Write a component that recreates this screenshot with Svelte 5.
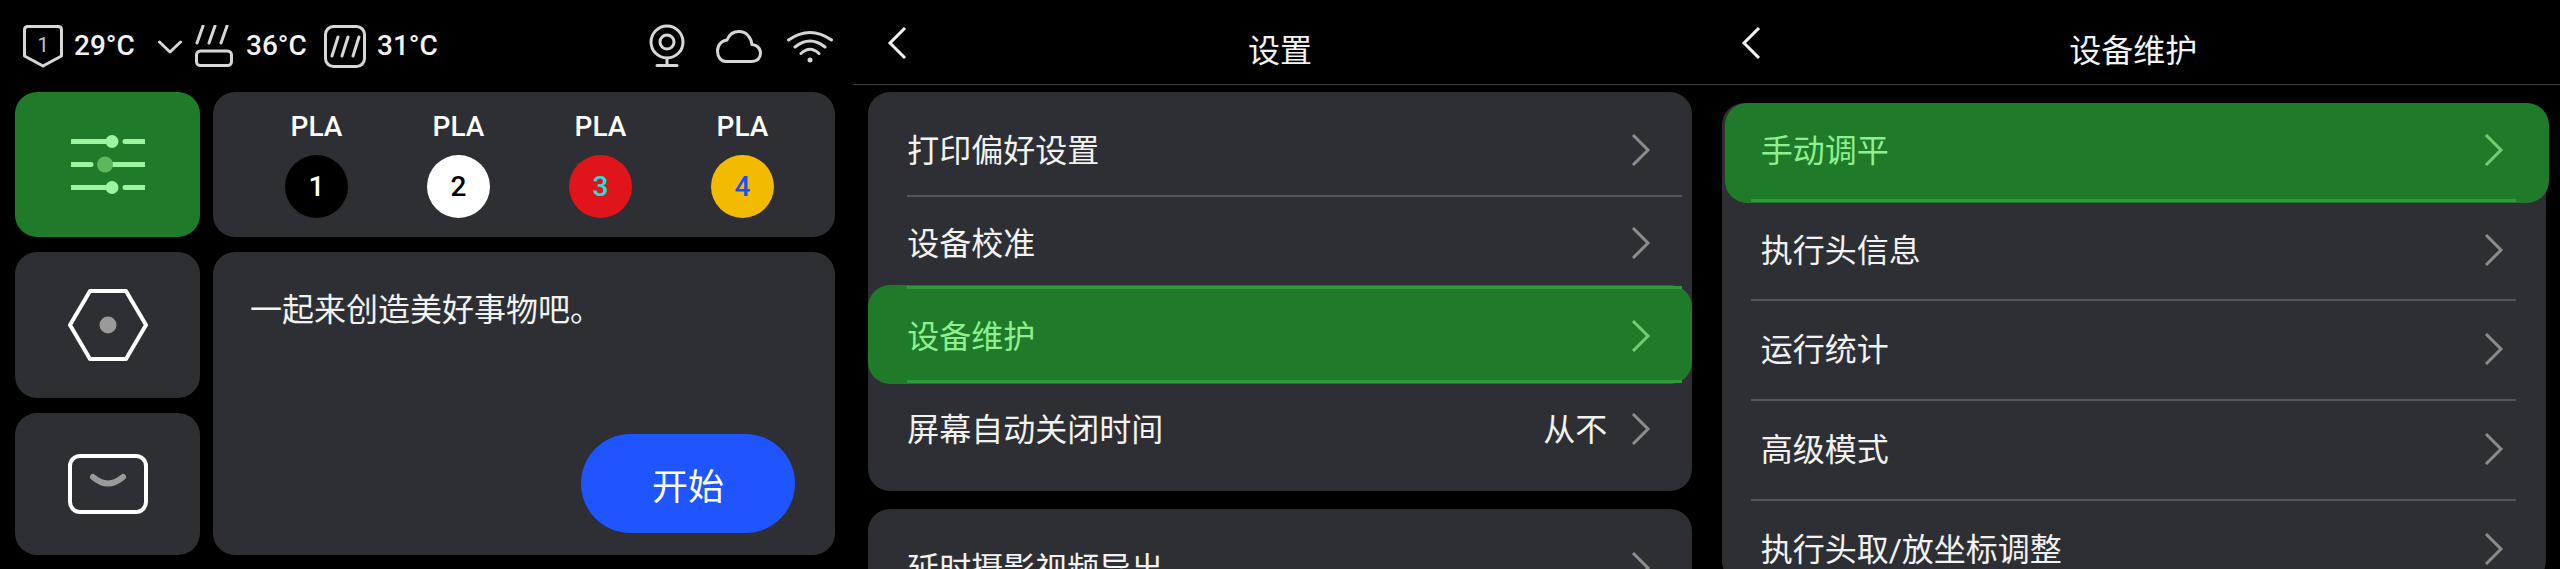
<script>
    const spools = [
        { n: 1, bg: "#000000", fg: "#ffffff" },
        { n: 2, bg: "#ffffff", fg: "#000000" },
        { n: 3, bg: "#e0141a", fg: "#22e0e0" },
        { n: 4, bg: "#f2bb00", fg: "#1a4fff" }
    ];

    const settings = [
        { label: "打印偏好设置", cls: "s1" },
        { label: "设备校准", cls: "s2" },
        { label: "设备维护", cls: "s3 active" },
        { label: "屏幕自动关闭时间", cls: "s4", value: "从不" }
    ];

    const maintenance = [
        { label: "手动调平", cls: "m1 active" },
        { label: "执行头信息", cls: "m2" },
        { label: "运行统计", cls: "m3" },
        { label: "高级模式", cls: "m4" },
        { label: "执行头取/放坐标调整", cls: "m5" }
    ];
</script>

{#snippet chevron()}
    <svg class="chev" width="20" height="32" viewBox="0 0 20 32"><path d="M2 1 L17 16 L2 31" /></svg>
{/snippet}

{#snippet header(title)}
    <header>
        <svg class="back" width="20" height="32" viewBox="0 0 20 32"><path d="M18 1 L3 16 L18 31" /></svg>
        <h1>{title}</h1>
    </header>
{/snippet}

<div class="screen">
    <section class="home">
        <div class="status">
            <div class="nozzle">
                <svg class="ico" width="40" height="43" viewBox="0 0 40 43"><path d="M5 1.5 H35 Q38.5 1.5 38.5 5 V31 L20 41 L1.5 31 V5 Q1.5 1.5 5 1.5 Z" /></svg>
                <span>1</span>
            </div>
            <span class="temp t1">29°C</span>
            <svg class="ico drop" width="24" height="14" viewBox="0 0 24 14"><path d="M1.5 2 L12 12 L22.5 2" /></svg>
            <svg class="ico" width="38" height="42" viewBox="0 0 38 42">
                <path d="M8 1 L2 18 M20 1 L14 18 M32 1 L26 18" />
                <rect x="1.5" y="26" width="35" height="14.5" rx="4" />
            </svg>
            <span class="temp t2">36°C</span>
            <svg class="ico chamber" width="42" height="43" viewBox="0 0 42 43">
                <rect x="1.5" y="1.5" width="39" height="40" rx="8" />
                <path d="M14 12 L8 31 M24 12 L18 31 M35 12 L29 31" />
            </svg>
            <span class="temp t3">31°C</span>
            <div class="right-icons">
                <svg class="ico cam" width="36" height="44" viewBox="0 0 36 44">
                    <circle cx="18" cy="18" r="16" />
                    <circle cx="18" cy="18" r="7" />
                    <path d="M18 34 V40 M8 41.5 H28" />
                </svg>
                <svg class="ico cloud" width="46" height="33" viewBox="0 0 46 33"><path d="M10 31.5 H36 C41 31.5 44.5 28 44.5 23 C44.5 18 40 14.5 36 14.5 C35 7 30 1.5 23 1.5 C17 1.5 13 5 11 10 C5.5 10.5 1.5 15 1.5 21 C1.5 27 5 31.5 10 31.5 Z" /></svg>
                <svg class="ico" width="46" height="33" viewBox="0 0 46 33">
                    <path d="M1.5 10 Q23 -5 44.5 10 M8 17 Q23 5 38 17 M14 23.5 Q23 15 32 23.5" />
                    <circle class="dot" cx="23" cy="30" r="2.5" />
                </svg>
            </div>
        </div>

        <div class="grid">
            <div class="tile green">
                <svg width="74" height="60" viewBox="0 0 74 60">
                    <path class="bar" d="M0 6.5 H40 M54 6.5 H74 M0 29.5 H20 M42 29.5 H74 M0 52.5 H40 M54 52.5 H74" />
                    <circle class="knob" cx="41" cy="6.5" r="6.5" />
                    <circle class="knob mid" cx="34" cy="29.5" r="8" />
                    <circle class="knob" cx="41" cy="52.5" r="6.5" />
                </svg>
            </div>
            <div class="card spools">
                {#each spools as s}
                    <div class="spool">
                        <span class="pla">PLA</span>
                        <span class="disc" style="background: {s.bg}; color: {s.fg}">{s.n}</span>
                    </div>
                {/each}
            </div>
            <div class="tile">
                <svg width="80" height="72" viewBox="0 0 80 72">
                    <path class="outline" d="M22 2 H58 L78 36 L58 70 H22 L2 36 Z" />
                    <circle class="grey" cx="40" cy="36" r="8.5" />
                </svg>
            </div>
            <div class="card hello">
                <p>一起来创造美好事物吧。</p>
                <button>开始</button>
            </div>
            <div class="tile">
                <svg width="80" height="60" viewBox="0 0 80 60">
                    <rect class="outline" x="2" y="2" width="76" height="56" rx="10" />
                    <path class="smile" d="M25 23 Q40 36 55 23" />
                </svg>
            </div>
        </div>
    </section>

    <section class="page">
        {@render header("设置")}
        <div class="card list first">
            {#each settings as row, i}
                <div class="row {row.cls}">
                    <span class="label">{row.label}</span>
                    {#if row.value}<span class="value">{row.value}</span>{/if}
                    {@render chevron()}
                </div>
                {#if i === 0}<div class="divider"></div>{/if}
            {/each}
        </div>
        <div class="card list second">
            <div class="row s5">
                <span class="label">延时摄影视频导出</span>
                {@render chevron()}
            </div>
        </div>
    </section>

    <section class="page third">
        {@render header("设备维护")}
        <div class="card list maint">
            {#each maintenance as row, i}
                <div class="row {row.cls}">
                    <span class="label">{row.label}</span>
                    {@render chevron()}
                </div>
                {#if i > 0 && i < maintenance.length - 1}<div class="divider"></div>{/if}
            {/each}
        </div>
    </section>
</div>

<style>
    :global(body) {
        margin: 0;
        background: #000;
    }

    .screen {
        display: flex;
        width: 2560px;
        height: 569px;
        overflow: hidden;
        background: #000;
        color: #fff;
        font-family: Roboto, "Noto Sans CJK SC", sans-serif;
    }

    section {
        width: 853.33px;
        flex: none;
    }

    .card {
        background: #2d2f34;
        border-radius: 22px;
    }

    /* home */
    .status {
        display: flex;
        align-items: center;
        height: 92px;
        padding: 0 20px 0 23px;
        box-sizing: border-box;
    }

    .ico {
        flex: none;
        fill: none;
        stroke: #d6d8d6;
        stroke-width: 3;
        stroke-linecap: round;
        stroke-linejoin: round;
    }

    .ico .dot {
        fill: #d6d8d6;
        stroke: none;
    }

    .nozzle {
        position: relative;
        width: 40px;
        height: 43px;
    }

    .nozzle span {
        position: absolute;
        left: 0;
        right: 0;
        top: 8px;
        text-align: center;
        font-size: 20px;
        line-height: 24px;
        color: #c4c6c4;
    }

    .temp {
        font-size: 28px;
        font-weight: 500;
        color: #f2f2f2;
        line-height: 32px;
        width: 60px;
        white-space: nowrap;
    }

    .t1 { margin-left: 11px; }
    .drop { margin: 2px 13px 0 24px; }
    .t2 { margin-left: 13px; }
    .chamber { margin-left: 18px; }
    .t3 { margin-left: 11px; }

    .right-icons {
        margin-left: auto;
        display: flex;
        align-items: center;
    }

    .cloud {
        margin: 0 25px 0 31px;
    }

    .grid {
        display: grid;
        grid-template-columns: 185px 622px;
        grid-template-rows: 145px 146px 142px;
        column-gap: 13px;
        row-gap: 15px;
        padding-left: 15px;
    }

    .tile {
        display: flex;
        align-items: center;
        justify-content: center;
        background: #2d2f34;
        border-radius: 22px;
    }

    .green {
        background: #1f7a2a;
    }

    .bar {
        stroke: #9df59d;
        stroke-width: 5;
        stroke-linecap: round;
        fill: none;
    }

    .knob {
        fill: #9df59d;
    }

    .knob.mid {
        fill: #5cb85c;
    }

    .outline {
        fill: none;
        stroke: #fff;
        stroke-width: 4;
        stroke-linejoin: round;
    }

    .grey {
        fill: #9a9a9a;
    }

    .smile {
        fill: none;
        stroke: #9a9a9a;
        stroke-width: 6;
        stroke-linecap: round;
    }

    .spools {
        display: flex;
        justify-content: space-between;
        padding: 0 61px 0 72px;
    }

    .spool {
        display: flex;
        flex-direction: column;
        align-items: center;
        padding-top: 20px;
    }

    .pla {
        font-size: 28px;
        font-weight: 500;
        line-height: 30px;
    }

    .disc {
        width: 63px;
        height: 63px;
        margin-top: 13px;
        border-radius: 50%;
        display: flex;
        align-items: center;
        justify-content: center;
        font-size: 28px;
        font-weight: 500;
    }

    .hello {
        grid-row: 2 / 4;
        grid-column: 2;
        display: flex;
        flex-direction: column;
        padding: 0 40px 22px 37px;
    }

    .hello p {
        margin: 38px 0 0;
        font-size: 32px;
        line-height: 40px;
        color: #f2f2f2;
    }

    button {
        margin: auto 0 0 auto;
        width: 214px;
        height: 99px;
        border: 0;
        border-radius: 50px;
        background: #1f55ff;
        color: #fff;
        font-family: inherit;
        font-size: 36px;
    }

    /* settings pages */
    header {
        position: relative;
        height: 84px;
        border-bottom: 1px solid #3a3a3a;
        display: flex;
        align-items: center;
        justify-content: center;
    }

    h1 {
        margin: 0;
        font-size: 32px;
        font-weight: 400;
        color: #f2f2f2;
        padding-top: 12px;
    }

    .back {
        position: absolute;
        left: 34px;
        top: 27px;
        fill: none;
        stroke: #f2f2f2;
        stroke-width: 3;
    }

    .list {
        margin-left: 15px;
        width: 824px;
    }

    .first {
        margin-top: 7px;
        height: 399px;
        padding-top: 13px;
        box-sizing: border-box;
    }

    .second {
        margin-top: 18px;
        height: 120px;
        padding-top: 13px;
        box-sizing: border-box;
    }

    .maint {
        margin-top: 18px;
        height: 480px;
    }

    .row {
        position: relative;
        display: flex;
        align-items: center;
        box-sizing: border-box;
        padding: 0 41px 0 39px;
        font-size: 32px;
        color: #f2f2f2;
    }

    .label {
        flex: 1;
        margin-bottom: 4px;
    }

    .value {
        margin-right: 24px;
        margin-bottom: 4px;
    }

    .chev {
        flex: none;
        fill: none;
        stroke: #8c8c8c;
        stroke-width: 3;
    }

    .divider {
        height: 2px;
        margin: 0 10px 0 39px;
        background: #55565a;
    }

    .s1 { height: 90px; }
    .s2 { height: 88px; padding-top: 4px; }
    .s3 { height: 99px; padding-top: 3px; }
    .s4 { height: 90px; }
    .s5 { height: 90px; padding-top: 2px; }

    .m1 { height: 100px; padding-bottom: 6px; }
    .m2 { height: 96px; padding-bottom: 3px; }
    .m3, .m4 { height: 98px; padding-bottom: 2px; }
    .m5 { height: 98px; padding-bottom: 2px; }

    .maint .row {
        padding-left: 39px;
        padding-right: 42px;
    }

    .maint .divider {
        margin: 0 30px 0 29px;
    }

    .active {
        background: #1f7a2a;
        border-radius: 22px;
        color: #8ef08e;
    }

    .active .chev {
        stroke: #6fd06f;
    }

    .active::before,
    .active::after {
        content: "";
        position: absolute;
        height: 3px;
        background: #2f9a3a;
        left: 39px;
        right: 10px;
    }

    .active::before { top: 1px; }
    .active::after { bottom: 1px; }

    .maint .m1 {
        margin: 0 -3px 0 3px;
        padding-left: 36px;
        padding-right: 45px;
    }

    .m1::before {
        display: none;
    }

    .m1::after {
        left: 26px;
        right: 33px;
    }
</style>
